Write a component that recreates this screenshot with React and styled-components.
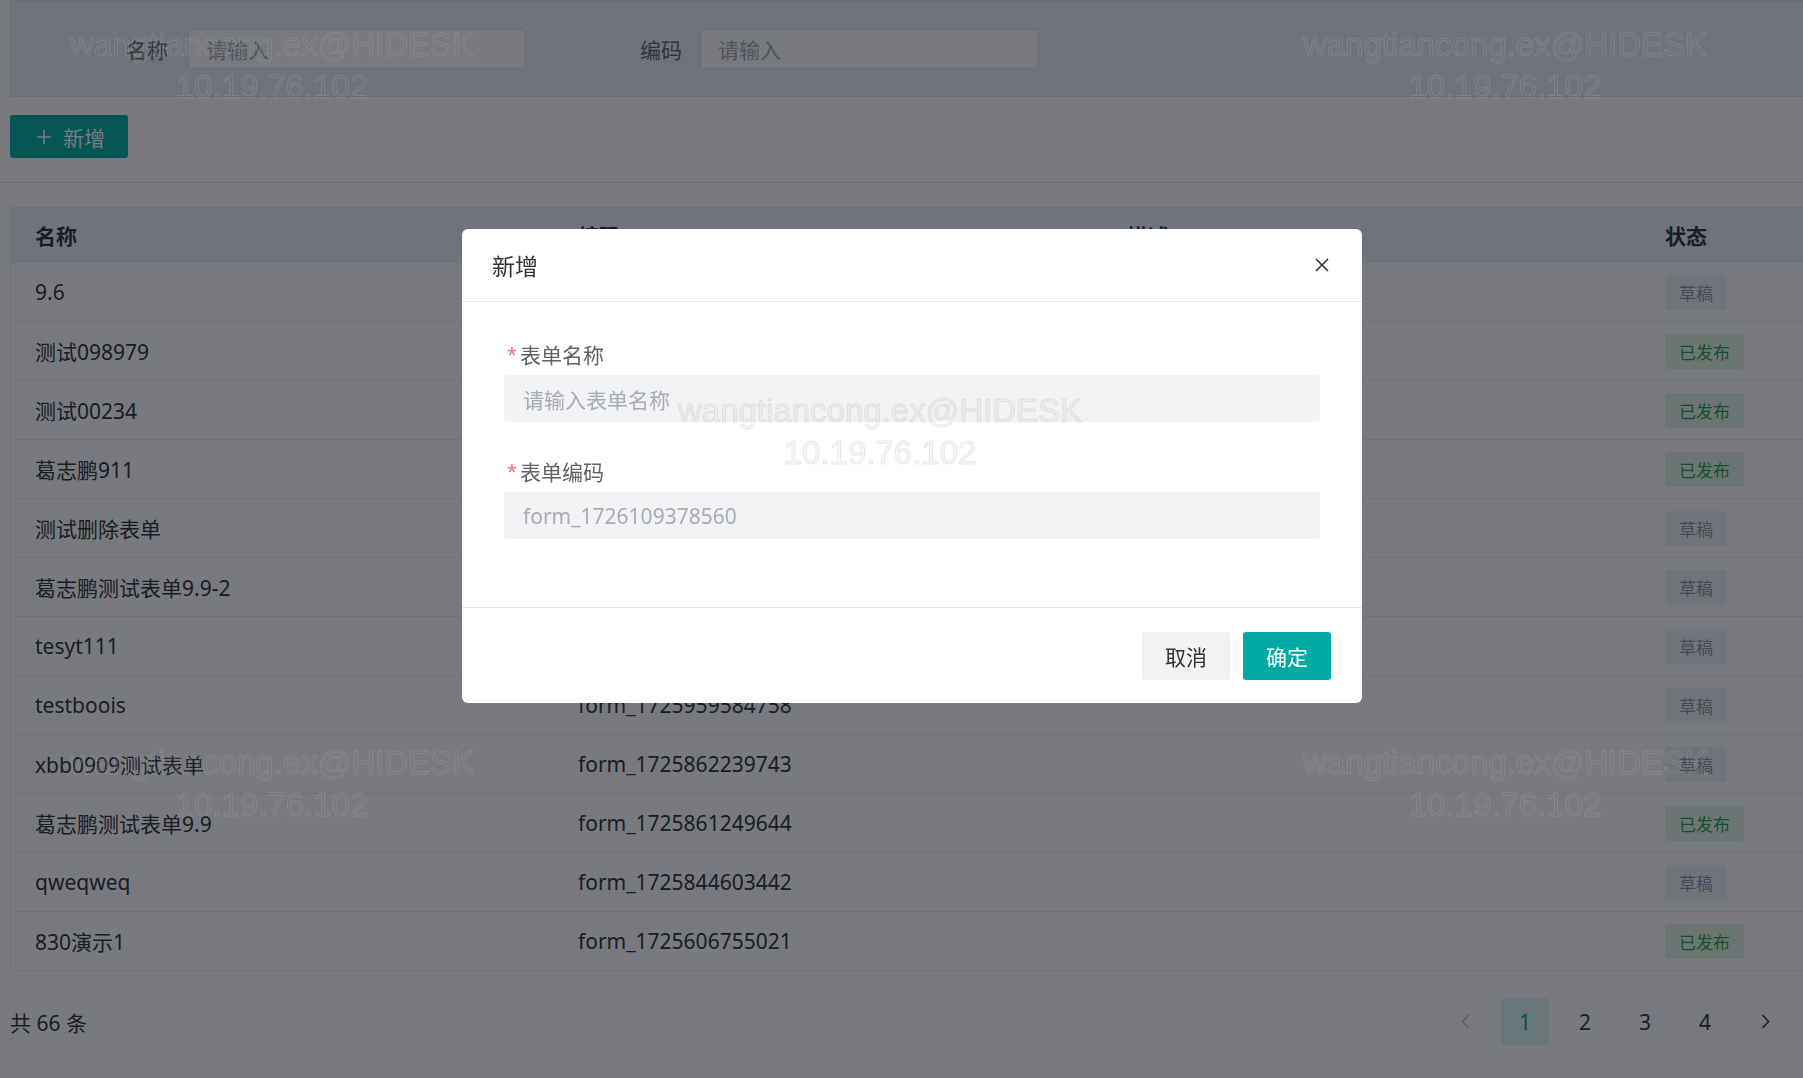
import React from 'react';
import styled, { createGlobalStyle } from 'styled-components';

const GlobalStyle = createGlobalStyle`
    html, body {
        margin: 0;
        padding: 0;
        background: #ffffff;
        font-family: "Noto Sans", "Noto Sans CJK SC", sans-serif;
        color: #303133;
    }
    * { box-sizing: border-box; }
`;

const Page = styled.div`
    position: relative;
    width: 1803px;
    height: 1078px;
    overflow: hidden;
`;

const TopSection = styled.div`
    padding: 0 0 24px 10px;
    border-bottom: 1px solid #e4e7ed;
`;

const FilterBox = styled.div`
    display: flex;
    align-items: center;
    height: 97px;
    padding-left: 115px;
    background: #eef0f5;
    border: 1px solid #dcdfe6;
    border-right: none;
`;

const FilterLabel = styled.span`
    font-size: 21px;
    color: #606266;
    margin-right: ${p => p.$gap || 19}px;
`;

const FilterInput = styled.div`
    width: ${p => p.$w}px;
    height: 40px;
    display: flex;
    align-items: center;
    padding-left: 17px;
    background: #ffffff;
    border: 1px solid #dcdfe6;
    border-radius: 3px;
    font-size: 21px;
    color: #a8abb2;
    margin-right: ${p => p.$after || 0}px;
`;

const AddButton = styled.button`
    display: flex;
    align-items: center;
    gap: 12px;
    height: 43px;
    margin-top: 18px;
    padding: 0 23px 0 27px;
    background: #00aba5;
    color: #ffffff;
    border: none;
    border-radius: 3px;
    font-family: inherit;
    font-size: 21px;
`;

const TableSection = styled.div`
    padding: 24px 0 0 10px;
`;

const Table = styled.div`
    border: 1px solid #ebeef5;
    border-right: none;
`;

const HeadRow = styled.div`
    display: grid;
    grid-template-columns: 543px 549px 538px 1fr;
    height: 54px;
    align-items: center;
    background: #eef0f5;
`;

const HeadCell = styled.div`
    padding-left: 24px;
    font-size: 21px;
    font-weight: 700;
    color: #303133;
`;

const Row = styled.div`
    display: grid;
    grid-template-columns: 543px 549px 538px 1fr;
    height: 59px;
    align-items: center;
    border-top: 1px solid #ebeef5;
    background: #ffffff;
`;

const Cell = styled.div`
    padding-left: 24px;
    font-size: 21px;
    color: #303133;
    white-space: nowrap;
`;

const Tag = styled.span`
    display: inline-flex;
    align-items: center;
    height: 35px;
    padding: 0 14px;
    border-radius: 3px;
    font-size: 17px;
    background: ${p => (p.$published ? '#e2f6e6' : '#eff1f5')};
    color: ${p => (p.$published ? '#1f9e44' : '#909399')};
`;

const Pager = styled.div`
    display: flex;
    align-items: center;
    justify-content: space-between;
    margin-top: 27px;
    padding-right: 14px;
    height: 47px;
`;

const Total = styled.span`
    font-size: 21px;
    color: #303133;
`;

const PageList = styled.div`
    display: flex;
    gap: 12px;
`;

const PageItem = styled.div`
    width: 48px;
    height: 47px;
    display: flex;
    align-items: center;
    justify-content: center;
    font-size: 21px;
    border-radius: 3px;
    background: ${p => (p.$active ? '#def5f3' : 'transparent')};
    color: ${p => (p.$active ? '#00a29c' : p.$disabled ? '#c0c4cc' : '#303133')};
`;

const Mask = styled.div`
    position: fixed;
    inset: 0;
    background: rgba(9, 12, 22, 0.55);
    z-index: 10;
`;

const ModalWrap = styled.div`
    position: fixed;
    inset: 0;
    z-index: 20;
    display: flex;
    justify-content: center;
    align-items: flex-start;
    padding: 229px 0 0 21px;
`;

const Modal = styled.div`
    width: 900px;
    background: #ffffff;
    border-radius: 6px;
    overflow: hidden;
`;

const ModalHeader = styled.div`
    display: flex;
    align-items: center;
    justify-content: space-between;
    height: 73px;
    padding: 0 33px 0 30px;
    border-bottom: 1px solid #e4e7ed;
`;

const ModalTitle = styled.span`
    font-size: 23px;
    color: #303133;
`;

const CloseBtn = styled.span`
    display: flex;
    width: 14px;
    height: 14px;
    color: #303133;
`;

const ModalBody = styled.div`
    padding: 36px 42px 35px 42px;
`;

const FormItem = styled.div`
    margin-bottom: 33px;
`;

const FormLabel = styled.div`
    height: 32px;
    display: flex;
    align-items: center;
    padding-left: 3px;
    font-size: 21px;
    color: #606266;
    margin-bottom: 5px;
`;

const Star = styled.span`
    color: #f56c6c;
    font-size: 18px;
    margin-right: 3px;
`;

const FormInput = styled.div`
    height: 47px;
    display: flex;
    align-items: center;
    padding-left: 19px;
    background: #f1f2f4;
    border-radius: 4px;
    font-size: 21px;
    color: #a8abb2;
`;

const ModalFooter = styled.div`
    display: flex;
    justify-content: flex-end;
    gap: 13px;
    padding: 24px 31px 23px 0;
    border-top: 1px solid #e4e7ed;
`;

const FooterButton = styled.button`
    width: 88px;
    height: 48px;
    border: none;
    border-radius: 3px;
    font-family: inherit;
    font-size: 21px;
    background: ${p => (p.$primary ? '#00aba5' : '#f1f2f4')};
    color: ${p => (p.$primary ? '#ffffff' : '#303133')};
`;

const MarkLayer = styled.div`
    position: fixed;
    inset: 0;
    z-index: 30;
    pointer-events: none;
`;

const Mark = styled.div`
    position: absolute;
    left: ${p => p.$x}px;
    top: ${p => p.$y}px;
    transform: translateX(-50%);
    text-align: center;
    white-space: nowrap;
    font-family: "Liberation Sans", Arial, sans-serif;
    font-size: 33px;
    line-height: 42px;
    color: rgba(90, 90, 90, 0.04);
    -webkit-text-stroke: 1px rgba(178, 178, 178, 0.27);
`;

const rows = [
    { name: '9.6', code: 'form_1726040562112', pub: false },
    { name: '测试098979', code: 'form_1726036412784', pub: true },
    { name: '测试00234', code: 'form_1726035187431', pub: true },
    { name: '葛志鹏911', code: 'form_1726024985562', pub: true },
    { name: '测试删除表单', code: 'form_1725999871246', pub: false },
    { name: '葛志鹏测试表单9.9-2', code: 'form_1725984412037', pub: false },
    { name: 'tesyt111', code: 'form_1725963112583', pub: false },
    { name: 'testboois', code: 'form_1725959584758', pub: false },
    { name: 'xbb0909测试表单', code: 'form_1725862239743', pub: false },
    { name: '葛志鹏测试表单9.9', code: 'form_1725861249644', pub: true },
    { name: 'qweqweq', code: 'form_1725844603442', pub: false },
    { name: '830演示1', code: 'form_1725606755021', pub: true },
];

const marks = [
    { x: 272, y: 24 },
    { x: 1505, y: 24 },
    { x: 880, y: 390 },
    { x: 272, y: 742 },
    { x: 1505, y: 742 },
];

const Plus = () => (
    <svg width="14" height="14" viewBox="0 0 14 14">
        <path d="M7 0v14M0 7h14" stroke="currentColor" strokeWidth="1.6" />
    </svg>
);

const Chevron = ({ left }) => (
    <svg width="9" height="15" viewBox="0 0 9 15">
        <path d={left ? 'M7.5 1L1.5 7.5l6 6.5' : 'M1.5 1l6 6.5-6 6.5'} fill="none" stroke="currentColor" strokeWidth="1.5" />
    </svg>
);

const App = () => {
    return (
        <Page>
            <GlobalStyle />

            <TopSection>
                <FilterBox>
                    <FilterLabel $gap={20}>名称</FilterLabel>
                    <FilterInput $w={338} $after={114}>请输入</FilterInput>
                    <FilterLabel $gap={18}>编码</FilterLabel>
                    <FilterInput $w={339}>请输入</FilterInput>
                </FilterBox>
                <AddButton><Plus /> 新增</AddButton>
            </TopSection>

            <TableSection>
                <Table>
                    <HeadRow>
                        <HeadCell>名称</HeadCell>
                        <HeadCell>编码</HeadCell>
                        <HeadCell>描述</HeadCell>
                        <HeadCell>状态</HeadCell>
                    </HeadRow>
                    {rows.map(r => (
                        <Row key={r.code}>
                            <Cell>{r.name}</Cell>
                            <Cell>{r.code}</Cell>
                            <Cell />
                            <Cell><Tag $published={r.pub}>{r.pub ? '已发布' : '草稿'}</Tag></Cell>
                        </Row>
                    ))}
                </Table>

                <Pager>
                    <Total>共 66 条</Total>
                    <PageList>
                        <PageItem $disabled><Chevron left /></PageItem>
                        <PageItem $active>1</PageItem>
                        <PageItem>2</PageItem>
                        <PageItem>3</PageItem>
                        <PageItem>4</PageItem>
                        <PageItem><Chevron /></PageItem>
                    </PageList>
                </Pager>
            </TableSection>

            <Mask />

            <ModalWrap>
                <Modal>
                    <ModalHeader>
                        <ModalTitle>新增</ModalTitle>
                        <CloseBtn>
                            <svg width="14" height="14" viewBox="0 0 14 14">
                                <path d="M1 1l12 12M13 1L1 13" stroke="currentColor" strokeWidth="1.6" />
                            </svg>
                        </CloseBtn>
                    </ModalHeader>
                    <ModalBody>
                        <FormItem>
                            <FormLabel><Star>*</Star>表单名称</FormLabel>
                            <FormInput>请输入表单名称</FormInput>
                        </FormItem>
                        <FormItem>
                            <FormLabel><Star>*</Star>表单编码</FormLabel>
                            <FormInput>form_1726109378560</FormInput>
                        </FormItem>
                    </ModalBody>
                    <ModalFooter>
                        <FooterButton>取消</FooterButton>
                        <FooterButton $primary>确定</FooterButton>
                    </ModalFooter>
                </Modal>
            </ModalWrap>

            <MarkLayer>
                {marks.map((m, i) => (
                    <Mark key={i} $x={m.x} $y={m.y}>
                        wangtiancong.ex@HIDESK<br />10.19.76.102
                    </Mark>
                ))}
            </MarkLayer>
        </Page>
    );
};

export default App;
